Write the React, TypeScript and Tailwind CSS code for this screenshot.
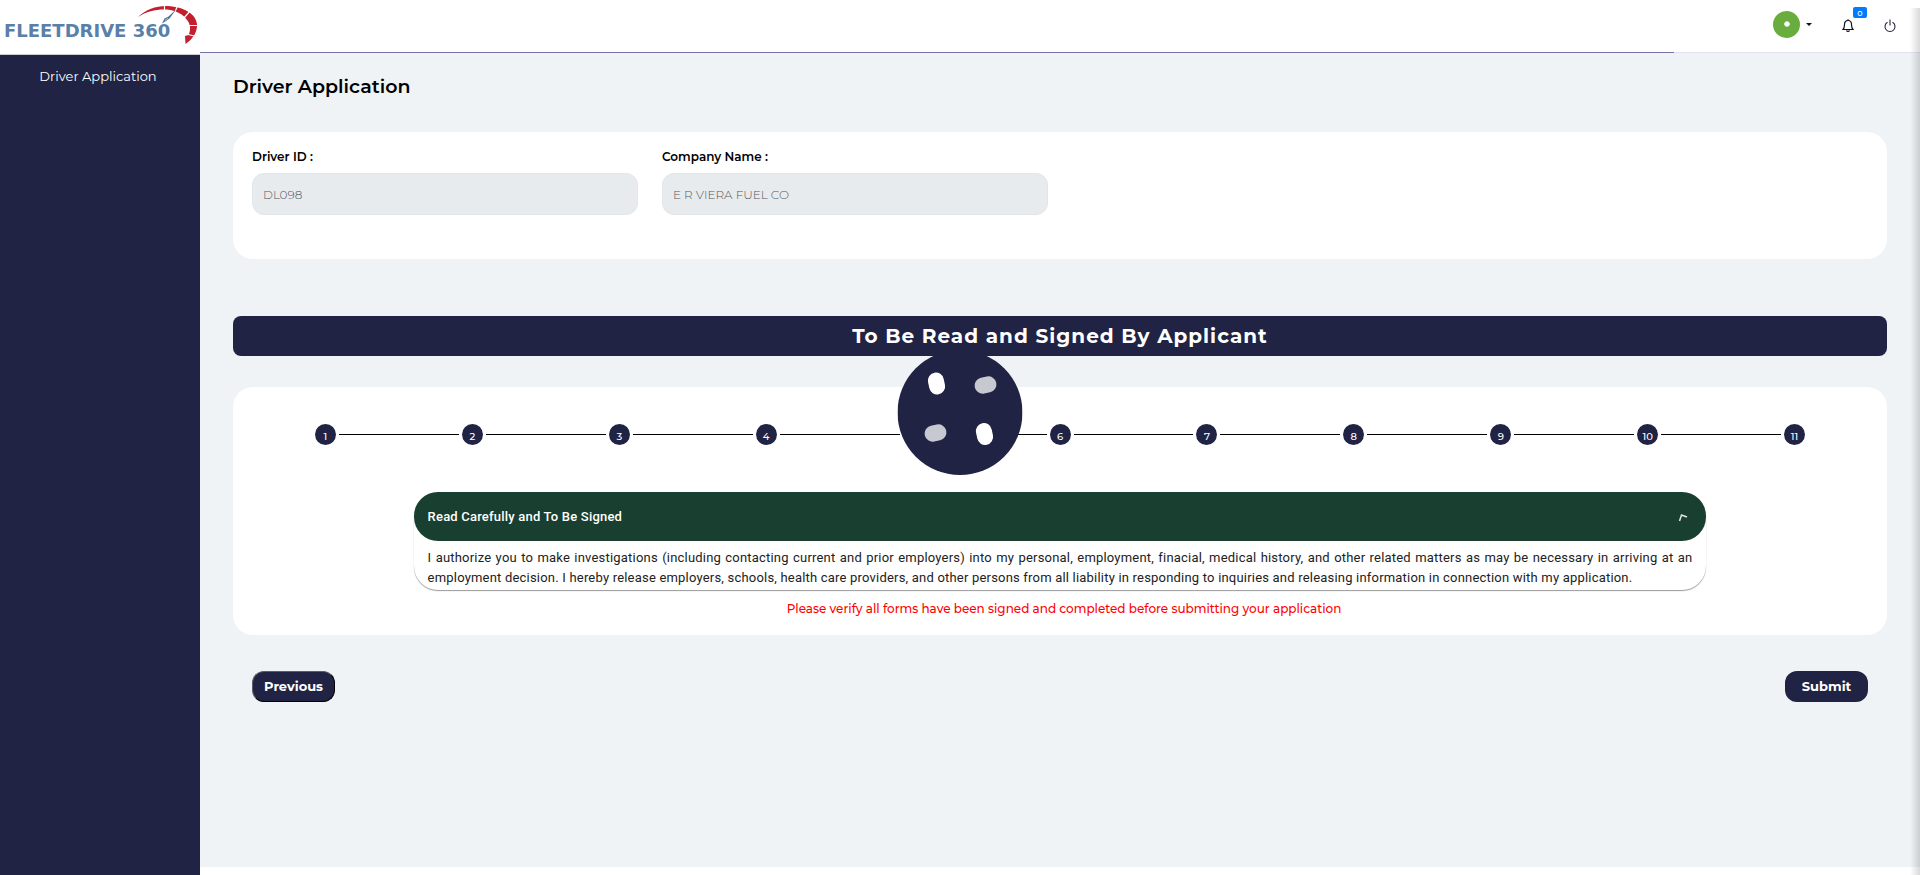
import React from 'react';

const steps = Array.from({ length: 11 }, (_, i) => i + 1);

function Logo() {
  return (
    <svg viewBox="0 0 200 54" className="h-[54px] w-[200px]" role="img" aria-label="FleetDrive 360">
      <text
        x="4"
        y="37"
        fill="#5a7fa8"
        fontSize="18"
        fontWeight="700"
        fontFamily="'DejaVu Sans', sans-serif"
      >
        FLEETDRIVE 360
      </text>
      <path
        d="M138 17 C146 9 157 5.500 168 6 C184 7 196 14 197 24 C197.500 32 193 39 185.500 44 L185 36 L188.500 35 C191 30 190.500 24 187 20 C183 14 176 10.500 167 9.500 C157 9 147 11 138 17 Z"
        fill="#c3202f"
      />
      <g stroke="#fff" strokeWidth="1.200">
        <path d="M164.500 5V11M177.500 6L174 14M190 11L184 18M198 25.500H188M196.500 36.500L186 34" />
      </g>
      <path d="M176.500 9L169.500 18.500L166 21L162 23.500L164.500 18.500L168.500 16.500Z" fill="#4a739e" />
      <path d="M165 20.500L168 18" stroke="#fff" strokeWidth="0.600" />
    </svg>
  );
}

function BellIcon() {
  return (
    <svg viewBox="0 0 12 14" className="h-[14px] w-3" fill="none" stroke="#15151f" strokeWidth="1.200">
      <path d="M1 10.500C2.300 9.300 2.500 8 2.500 5.500C2.500 3 4 1.500 6 1.500S9.500 3 9.500 5.500C9.500 8 9.700 9.300 11 10.500Z" />
      <path d="M6 0.300V1.500M4.600 11.300C4.800 12.800 7.200 12.800 7.400 11.300" />
    </svg>
  );
}

function PowerIcon() {
  return (
    <svg viewBox="0 0 12 14" className="h-[14px] w-3" fill="none" stroke="#2a2440" strokeWidth="1.100">
      <path d="M3.500 3.200A5 5 0 1 0 8.500 3.200M6 0.500V6.500" />
    </svg>
  );
}

function Loader() {
  return (
    <svg
      viewBox="0 0 125 125"
      className="absolute top-[350px] left-1/2 h-[125px] w-[125px] -translate-x-1/2"
      role="img"
      aria-label="Loading"
    >
      <circle cx="62.500" cy="62.500" r="62.500" fill="#212344" />
      <g fill="#fff">
        <rect x="31" y="22.500" width="16" height="22" rx="8" transform="rotate(-12 39 33.500)" />
        <rect x="79" y="73" width="16" height="22" rx="8" transform="rotate(-12 87 84)" />
      </g>
      <g fill="#c8c8d1">
        <rect x="77" y="27" width="22" height="16" rx="8" transform="rotate(-12 88 35)" />
        <rect x="27" y="75" width="22" height="16" rx="8" transform="rotate(-12 38 83)" />
      </g>
    </svg>
  );
}

function Field({ id, label, value }: { id: string; label: string; value: string }) {
  return (
    <div className="flex flex-col px-3">
      <label htmlFor={id} className="mb-2 text-xs leading-4 font-semibold text-black">
        {label}
      </label>
      <input
        id={id}
        defaultValue={value}
        disabled
        className="h-[42px] w-full rounded-xl border border-[#e1e6ea] bg-[#e7ebee] px-[10px] text-xs font-light text-[#55585c]"
      />
    </div>
  );
}

function Stepper() {
  return (
    <ol className="grid grid-cols-11">
      {steps.map((n) => (
        <li key={n} className="flex items-center gap-[3px]">
          <span className={n === 1 ? 'h-px flex-1' : 'h-px flex-1 bg-black'} />
          <span className="flex h-[21px] w-[21px] items-center justify-center rounded-full bg-[#212344] pt-1 text-[10px] leading-none font-medium text-white">
            {n}
          </span>
          <span className={n === steps.length ? 'h-px flex-1' : 'h-px flex-1 bg-black'} />
        </li>
      ))}
    </ol>
  );
}

export default function App() {
  return (
    <div className="relative flex min-h-screen overflow-hidden bg-white font-[Montserrat,Inter,sans-serif]">
      <aside className="flex w-[200px] shrink-0 flex-col bg-[#212344]">
        <div className="border-b border-[#c9cbd0] bg-white">
          <Logo />
        </div>
        <nav className="flex justify-center pt-[11px] pr-1">
          <a href="#driver-application" className="text-[13px] leading-5 text-white">
            Driver Application
          </a>
        </nav>
      </aside>

      <div className="flex min-w-0 flex-1 flex-col">
        <header className="flex h-[52px] items-center justify-end bg-white pr-6">
          <button type="button" aria-label="Account" className="mb-1 flex items-center gap-[6px]">
            <span className="flex h-[27px] w-[27px] items-center justify-center rounded-full bg-[#68ad3d]">
              <svg viewBox="0 0 8 8" className="h-2 w-2" stroke="#fff" strokeWidth="1.300">
                <path d="M4 1V7M1 4H7M2 2L6 6M6 2L2 6" />
              </svg>
            </span>
            <svg viewBox="0 0 6 3" className="h-[3px] w-[6px]" fill="#111">
              <path d="M0 0H6L3 3Z" />
            </svg>
          </button>
          <button type="button" aria-label="Notifications" className="relative ml-[30px]">
            <BellIcon />
            <span className="absolute -top-3 left-[11px] flex h-[11px] w-[14px] items-center justify-center rounded-[2px] bg-[#007bff] text-[8px] leading-none font-medium text-white">
              0
            </span>
          </button>
          <button type="button" aria-label="Log out" className="ml-[30px]">
            <PowerIcon />
          </button>
        </header>
        <div className="h-px bg-[#dee3ee]">
          <div className="h-px w-6/7 bg-[#7672a5]" />
        </div>

        <main className="mb-2 flex-1 bg-[#eff3f6] px-[33px] pt-5">
          <h1 className="text-[19px] leading-7 font-semibold text-black">Driver Application</h1>

          <section className="mt-[31px] rounded-[20px] bg-white px-[7px] pt-[17px] pb-11">
            <div className="grid grid-cols-4">
              <Field id="driver-id" label="Driver ID :" value="DL098" />
              <Field id="company-name" label="Company Name :" value="E R VIERA FUEL CO" />
            </div>
          </section>

          <h2 className="mt-[57px] rounded-lg bg-[#212344] text-center text-xl leading-10 font-bold tracking-wider text-white">
            To Be Read and Signed By Applicant
          </h2>

          <section className="mt-[31px] rounded-[20px] bg-white px-[19px] pt-[37px] pb-[18px]">
            <Stepper />

            <div className="mx-auto mt-[47px] w-4/5 rounded-3xl bg-white font-[Roboto,sans-serif] tracking-[0.2px] shadow-[0_1px_1px_rgba(0,0,0,0.4)]">
              <button
                type="button"
                aria-expanded="true"
                className="flex h-[49px] w-full items-center justify-between rounded-3xl bg-[#183f30] pr-[18px] pl-[14px] text-left text-[13px] font-medium text-white"
              >
                Read Carefully and To Be Signed
                <svg viewBox="0 0 10 10" className="h-[10px] w-[10px]" fill="none" stroke="#dfe6e3" strokeWidth="1.500">
                  <path d="M1.500 9L3.500 3L9 5" />
                </svg>
              </button>
              <p className="px-[14px] pt-[7px] pb-[2px] text-justify text-[13px] leading-5 text-[#222]">
                I authorize you to make investigations (including contacting current and prior employers) into my
                personal, employment, finacial, medical history, and other related matters as may be necessary in
                arriving at an employment decision. I hereby release employers, schools, health care providers, and
                other persons from all liability in responding to inquiries and releasing information in connection
                with my application.
              </p>
            </div>

            <p className="mt-[11px] pl-2 text-center text-xs leading-4 font-medium text-[#f00]">
              Please verify all forms have been signed and completed before submitting your application
            </p>
          </section>

          <div className="mt-9 flex justify-between px-[19px]">
            <button
              type="button"
              className="h-[31px] w-[83px] rounded-xl border border-t-[#5b5d66] border-r-black border-b-black border-l-[#5b5d66] bg-[#212344] text-[13px] font-bold text-white"
            >
              Previous
            </button>
            <button type="button" className="h-[31px] w-[83px] rounded-xl bg-[#212344] text-[13px] font-bold text-white">
              Submit
            </button>
          </div>
        </main>
      </div>

      <Loader />
      <div className="pointer-events-none absolute top-2 right-0 bottom-0 w-[10px] bg-linear-to-r from-transparent to-black/15" />
    </div>
  );
}
